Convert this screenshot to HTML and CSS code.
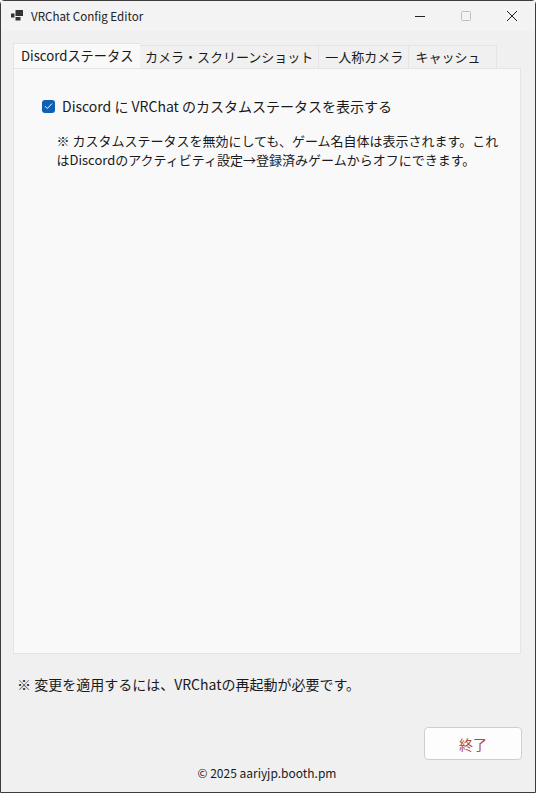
FILE: index.html
```html
<!DOCTYPE html>
<html lang="ja">
<head>
    <meta charset="UTF-8">
    <title>VRChat Config Editor</title>
    <link rel="stylesheet" href="styles.css">
</head>
<body>
    <div class="window">
        <header class="titlebar">
            <svg class="app-icon" width="14" height="12" viewBox="0 0 14 12">
                <rect x="0" y="3.5" width="3.5" height="4" fill="#333"/>
                <rect x="4.5" y="0" width="7.5" height="6" fill="#333"/>
                <rect x="4.5" y="7" width="5" height="3.5" fill="#333"/>
            </svg>
            <span class="title">VRChat Config Editor</span>
            <div class="controls">
                <svg class="control" width="46" height="30" viewBox="0 0 46 30">
                    <path d="M18 15.5h10" stroke="#222" stroke-width="1"/>
                </svg>
                <svg class="control" width="46" height="30" viewBox="0 0 46 30">
                    <rect x="18.5" y="10.5" width="9" height="9" rx="1" fill="none" stroke="#bdbdbd"/>
                </svg>
                <svg class="control" width="46" height="30" viewBox="0 0 46 30">
                    <path d="M18 10l10 10M28 10l-10 10" stroke="#222" stroke-width="1"/>
                </svg>
            </div>
        </header>

        <main class="content">
            <nav class="tabs">
                <div class="tab active">Discordステータス</div>
                <div class="tab tab-camera">カメラ・スクリーンショット</div>
                <div class="tab tab-first">一人称カメラ</div>
                <div class="tab tab-cache">キャッシュ</div>
            </nav>
            <section class="panel">
                <label class="check-row">
                    <span class="checkbox">
                        <svg width="9" height="8" viewBox="0 0 9 8">
                            <path d="M1 4.2l2.3 2.3L8 1.5" fill="none" stroke="#fff" stroke-width="1"/>
                        </svg>
                    </span>
                    <span>Discord に VRChat のカスタムステータスを表示する</span>
                </label>
                <p class="note">※ カスタムステータスを無効にしても、ゲーム名自体は表示されます。これはDiscordのアクティビティ設定→登録済みゲームからオフにできます。</p>
            </section>
            <p class="restart">※ 変更を適用するには、VRChatの再起動が必要です。</p>
            <div class="actions">
                <button class="exit">終了</button>
            </div>
            <footer class="copyright">© 2025 aariyjp.booth.pm</footer>
        </main>
    </div>
</body>
</html>
```

FILE: styles.css
```css
html, body {
    margin: 0;
    padding: 0;
}

body {
    font-family: "Noto Sans CJK JP", "Noto Sans", sans-serif;
    color: #1a1a1a;
}

.window {
    box-sizing: border-box;
    width: 536px;
    height: 793px;
    display: flex;
    flex-direction: column;
    background-color: #f0f0f0;
    border: 1px solid #3c3c3c;
    border-radius: 4px 4px 0 0;
}

.titlebar {
    height: 30px;
    display: flex;
    align-items: center;
    padding-left: 10px;
    background-color: #f3f3f3;
}

.app-icon {
    margin-right: 6px;
}

.title {
    font-size: 11.6px;
    color: #222;
}

.controls {
    margin-left: auto;
    display: flex;
}

.content {
    flex: 1;
    display: flex;
    flex-direction: column;
    padding: 12px 14px 0 12px;
}

.tabs {
    display: flex;
    align-items: flex-end;
    height: 25px;
}

.tab {
    box-sizing: border-box;
    height: 23px;
    font-size: 13px;
    line-height: 22px;
    white-space: nowrap;
    background-color: #f0f0f0;
    border: 1px solid #e4e4e4;
    border-bottom: 0;
    border-left: 0;
}

.tab.active {
    width: 127px;
    height: 25px;
    line-height: 24px;
    padding-left: 7px;
    font-size: 13.2px;
    background-color: #f9f9f9;
    border-left: 1px solid #e4e4e4;
    border-right: 0;
}

.tab-camera {
    padding: 0 5px;
}

.tab-first {
    padding: 0 5px 0 6px;
}

.tab-cache {
    padding: 0 16px 0 6px;
}

.panel {
    box-sizing: border-box;
    width: 508px;
    height: 586px;
    padding: 28px 20px 0 28px;
    background-color: #f9f9f9;
    border: 1px solid #e4e4e4;
}

.check-row {
    height: 18px;
    display: flex;
    align-items: center;
    gap: 7px;
    font-size: 14px;
    line-height: 20px;
}

.checkbox {
    width: 13px;
    height: 13px;
    display: flex;
    align-items: center;
    justify-content: center;
    background-color: #0f5fb3;
    border-radius: 3px;
}

.note {
    margin: 16px 0 0 14.5px;
    font-size: 13px;
    line-height: 19px;
}

.restart {
    margin: 20px 0 0 4px;
    font-size: 14px;
    line-height: 20px;
}

.actions {
    display: flex;
    justify-content: flex-end;
    margin-top: 33px;
}

.exit {
    width: 98px;
    height: 33px;
    margin-right: -1px;
    font-family: inherit;
    font-size: 14px;
    color: #b04a4a;
    background-color: #fdfdfd;
    border: 1px solid #cfcfcf;
    border-radius: 4px;
}

.copyright {
    margin-top: 4px;
    font-size: 12px;
    line-height: 18px;
    text-align: center;
}
```
